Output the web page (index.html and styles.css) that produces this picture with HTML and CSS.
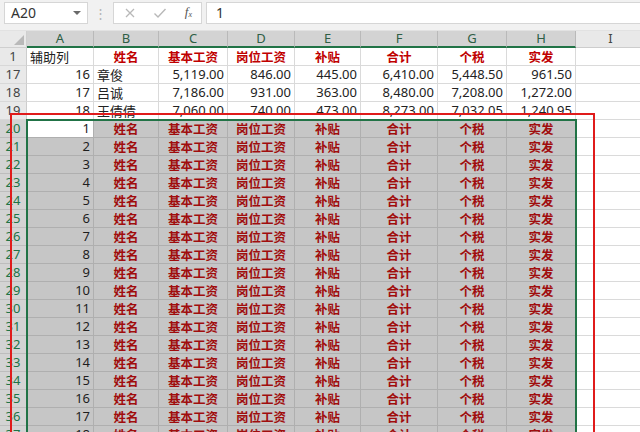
FILE: index.html
```html
<!DOCTYPE html>
<html>
<head>
<meta charset="utf-8">
<link rel="stylesheet" href="styles.css">
</head>
<body>
<div class="app">
  <div class="fbar">
    <div class="namebox"><span class="nb-text">A20</span><svg class="nb-arrow" width="8" height="5" viewBox="0 0 8 5"><path d="M0 0 L8 0 L4 4 Z" fill="#6a6a6a"/></svg></div>
    <div class="dots">⋮</div>
    <div class="btns">
      <svg width="12" height="12" viewBox="0 0 12 12"><path d="M2 2 L10 10 M10 2 L2 10" stroke="#b8b8b8" stroke-width="1.3" fill="none"/></svg>
      <svg width="14" height="12" viewBox="0 0 14 12"><path d="M1.5 6.5 L5 10 L12.5 2" stroke="#b8b8b8" stroke-width="1.4" fill="none"/></svg>
      <span class="fx">f<sub>x</sub></span>
    </div>
    <div class="finput">1</div>
  </div>
  <div class="sheet" id="sheet">
    <div class="corner"><svg width="10" height="10" viewBox="0 0 10 10"><path d="M10 0 L10 10 L0 10 Z" fill="#b9b9b9"/></svg></div>
    <div class="ch on">A</div><div class="ch on">B</div><div class="ch on">C</div><div class="ch on">D</div><div class="ch on">E</div><div class="ch on">F</div><div class="ch on">G</div><div class="ch on">H</div><div class="ch">I</div>

    <div class="rh">1</div><div class="c l">辅助列</div><div class="c h">姓名</div><div class="c h">基本工资</div><div class="c h">岗位工资</div><div class="c h">补贴</div><div class="c h">合计</div><div class="c h">个税</div><div class="c h">实发</div><div class="c"></div>

    <div class="rh">17</div><div class="c r">16</div><div class="c l">章俊</div><div class="c r">5,119.00</div><div class="c r">846.00</div><div class="c r">445.00</div><div class="c r">6,410.00</div><div class="c r">5,448.50</div><div class="c r">961.50</div><div class="c"></div>
    <div class="rh">18</div><div class="c r">17</div><div class="c l">吕诚</div><div class="c r">7,186.00</div><div class="c r">931.00</div><div class="c r">363.00</div><div class="c r">8,480.00</div><div class="c r">7,208.00</div><div class="c r">1,272.00</div><div class="c"></div>
    <div class="rh">19</div><div class="c r">18</div><div class="c l">王倩倩</div><div class="c r">7,060.00</div><div class="c r">740.00</div><div class="c r">473.00</div><div class="c r">8,273.00</div><div class="c r">7,032.05</div><div class="c r">1,240.95</div><div class="c"></div>

    <div class="rh on">20</div><div class="c r act">1</div><div class="c s">姓名</div><div class="c s">基本工资</div><div class="c s">岗位工资</div><div class="c s">补贴</div><div class="c s">合计</div><div class="c s">个税</div><div class="c s">实发</div><div class="c"></div>
    <div class="rh on">21</div><div class="c r sn">2</div><div class="c s">姓名</div><div class="c s">基本工资</div><div class="c s">岗位工资</div><div class="c s">补贴</div><div class="c s">合计</div><div class="c s">个税</div><div class="c s">实发</div><div class="c"></div>
    <div class="rh on">22</div><div class="c r sn">3</div><div class="c s">姓名</div><div class="c s">基本工资</div><div class="c s">岗位工资</div><div class="c s">补贴</div><div class="c s">合计</div><div class="c s">个税</div><div class="c s">实发</div><div class="c"></div>
    <div class="rh on">23</div><div class="c r sn">4</div><div class="c s">姓名</div><div class="c s">基本工资</div><div class="c s">岗位工资</div><div class="c s">补贴</div><div class="c s">合计</div><div class="c s">个税</div><div class="c s">实发</div><div class="c"></div>
    <div class="rh on">24</div><div class="c r sn">5</div><div class="c s">姓名</div><div class="c s">基本工资</div><div class="c s">岗位工资</div><div class="c s">补贴</div><div class="c s">合计</div><div class="c s">个税</div><div class="c s">实发</div><div class="c"></div>
    <div class="rh on">25</div><div class="c r sn">6</div><div class="c s">姓名</div><div class="c s">基本工资</div><div class="c s">岗位工资</div><div class="c s">补贴</div><div class="c s">合计</div><div class="c s">个税</div><div class="c s">实发</div><div class="c"></div>
    <div class="rh on">26</div><div class="c r sn">7</div><div class="c s">姓名</div><div class="c s">基本工资</div><div class="c s">岗位工资</div><div class="c s">补贴</div><div class="c s">合计</div><div class="c s">个税</div><div class="c s">实发</div><div class="c"></div>
    <div class="rh on">27</div><div class="c r sn">8</div><div class="c s">姓名</div><div class="c s">基本工资</div><div class="c s">岗位工资</div><div class="c s">补贴</div><div class="c s">合计</div><div class="c s">个税</div><div class="c s">实发</div><div class="c"></div>
    <div class="rh on">28</div><div class="c r sn">9</div><div class="c s">姓名</div><div class="c s">基本工资</div><div class="c s">岗位工资</div><div class="c s">补贴</div><div class="c s">合计</div><div class="c s">个税</div><div class="c s">实发</div><div class="c"></div>
    <div class="rh on">29</div><div class="c r sn">10</div><div class="c s">姓名</div><div class="c s">基本工资</div><div class="c s">岗位工资</div><div class="c s">补贴</div><div class="c s">合计</div><div class="c s">个税</div><div class="c s">实发</div><div class="c"></div>
    <div class="rh on">30</div><div class="c r sn">11</div><div class="c s">姓名</div><div class="c s">基本工资</div><div class="c s">岗位工资</div><div class="c s">补贴</div><div class="c s">合计</div><div class="c s">个税</div><div class="c s">实发</div><div class="c"></div>
    <div class="rh on">31</div><div class="c r sn">12</div><div class="c s">姓名</div><div class="c s">基本工资</div><div class="c s">岗位工资</div><div class="c s">补贴</div><div class="c s">合计</div><div class="c s">个税</div><div class="c s">实发</div><div class="c"></div>
    <div class="rh on">32</div><div class="c r sn">13</div><div class="c s">姓名</div><div class="c s">基本工资</div><div class="c s">岗位工资</div><div class="c s">补贴</div><div class="c s">合计</div><div class="c s">个税</div><div class="c s">实发</div><div class="c"></div>
    <div class="rh on">33</div><div class="c r sn">14</div><div class="c s">姓名</div><div class="c s">基本工资</div><div class="c s">岗位工资</div><div class="c s">补贴</div><div class="c s">合计</div><div class="c s">个税</div><div class="c s">实发</div><div class="c"></div>
    <div class="rh on">34</div><div class="c r sn">15</div><div class="c s">姓名</div><div class="c s">基本工资</div><div class="c s">岗位工资</div><div class="c s">补贴</div><div class="c s">合计</div><div class="c s">个税</div><div class="c s">实发</div><div class="c"></div>
    <div class="rh on">35</div><div class="c r sn">16</div><div class="c s">姓名</div><div class="c s">基本工资</div><div class="c s">岗位工资</div><div class="c s">补贴</div><div class="c s">合计</div><div class="c s">个税</div><div class="c s">实发</div><div class="c"></div>
    <div class="rh on">36</div><div class="c r sn">17</div><div class="c s">姓名</div><div class="c s">基本工资</div><div class="c s">岗位工资</div><div class="c s">补贴</div><div class="c s">合计</div><div class="c s">个税</div><div class="c s">实发</div><div class="c"></div>
    <div class="rh on">37</div><div class="c r sn">18</div><div class="c s">姓名</div><div class="c s">基本工资</div><div class="c s">岗位工资</div><div class="c s">补贴</div><div class="c s">合计</div><div class="c s">个税</div><div class="c s">实发</div><div class="c"></div>

    <div class="selbox"></div>
    <div class="redbox"></div>
  </div>
</div>
</body>
</html>
```

FILE: styles.css
```css
* { box-sizing: border-box; }
html, body { margin: 0; padding: 0; }
body {
  width: 640px;
  height: 432px;
  overflow: hidden;
  background: #ffffff;
  font-family: "Noto Sans CJK SC", "Noto Sans", sans-serif;
}
.app { width: 640px; height: 432px; overflow: hidden; }

.fbar {
  height: 31px;
  background: #f1f1f1;
  display: flex;
  align-items: flex-start;
  padding-top: 2px;
  padding-left: 4px;
  border-bottom: 1px solid #e2e2e2;
}
.namebox {
  width: 84px;
  height: 22px;
  background: #fff;
  border: 1px solid #d6d6d6;
  display: flex;
  align-items: center;
  justify-content: space-between;
  padding: 0 6px 0 6px;
  font-size: 14px;
  color: #333;
  font-family: "Noto Sans", "Noto Sans CJK SC", sans-serif;
}
.nb-text { line-height: 20px; }
.dots {
  width: 25px;
  text-align: center;
  color: #b4b4b4;
  font-size: 13px;
  line-height: 22px;
}
.btns {
  width: 89px;
  height: 22px;
  background: #fff;
  border: 1px solid #d6d6d6;
  display: flex;
  align-items: center;
  justify-content: space-between;
  padding: 0 9px 0 10px;
}
.fx {
  font-family: "Liberation Serif", serif;
  font-style: italic;
  font-size: 13px;
  color: #555;
  line-height: 12px;
}
.fx sub { font-size: 8px; vertical-align: -1px; }
.finput {
  margin-left: 4px;
  flex: 1;
  height: 22px;
  background: #fff;
  border: 1px solid #d6d6d6;
  border-right: none;
  padding-left: 9px;
  font-size: 14px;
  line-height: 20px;
  color: #333;
  font-family: "Noto Sans", sans-serif;
}

.sheet {
  position: relative;
  display: grid;
  grid-template-columns: 27px 67px 65px 69px 67px 66px 77px 69px 69px 70px;
  grid-template-rows: 17px;
  grid-auto-rows: 18px;
  font-size: 13px;
  color: #222;
}
.corner {
  background: #e9e9e9;
  border-right: 1px solid #cfcfcf;
  border-bottom: 1px solid #cfcfcf;
  display: flex;
  align-items: flex-end;
  justify-content: flex-end;
  padding: 0 2px 2px 0;
}
.ch {
  background: #e9e9e9;
  border-right: 1px solid #cdcdcd;
  border-bottom: 1px solid #cdcdcd;
  text-align: center;
  line-height: 15px;
  font-size: 13px;
  color: #444;
  font-family: "Noto Sans", sans-serif;
}
.ch.on {
  background: #d3d3d3;
  border-right-color: #b9b9b9;
  border-bottom: 2px solid #217346;
  color: #2e5e45;
}
.rh {
  background: #e9e9e9;
  border-right: 1px solid #cdcdcd;
  border-bottom: 1px solid #d8d8d8;
  text-align: center;
  line-height: 17px;
  font-size: 13px;
  color: #444;
  font-family: "Noto Sans", sans-serif;
  overflow: hidden;
}
.rh.on {
  background: #d3d3d3;
  color: #217346;
  border-bottom-color: #bdbdbd;
}
.c {
  border-right: 1px solid #dadada;
  border-bottom: 1px solid #dadada;
  line-height: 17px;
  white-space: nowrap;
  overflow: hidden;
  padding: 0 3px;
}
.c.l { text-align: left; font-size: 13px; }
.c.r { text-align: right; font-family: "Noto Sans", "Noto Sans CJK SC", sans-serif; }
.c.h {
  text-align: center;
  font-weight: bold;
  font-size: 12.5px;
  color: #c00000;
}
.c.s {
  text-align: center;
  font-weight: bold;
  font-size: 12.5px;
  color: #a00d0d;
  background: #c6c6c6;
  border-color: #afafaf;
}
.c.sn {
  background: #c6c6c6;
  border-color: #afafaf;
  color: #1e1e1e;
}
.c.act { background: #fff; border-color: #afafaf; }

.selbox {
  position: absolute;
  left: 26px;
  top: 88px;
  width: 551px;
  height: 400px;
  border: 2px solid #217346;
  pointer-events: none;
}
.redbox {
  position: absolute;
  left: 10px;
  top: 82px;
  width: 585px;
  height: 400px;
  border: 2px solid #e01b1b;
  pointer-events: none;
}
```
